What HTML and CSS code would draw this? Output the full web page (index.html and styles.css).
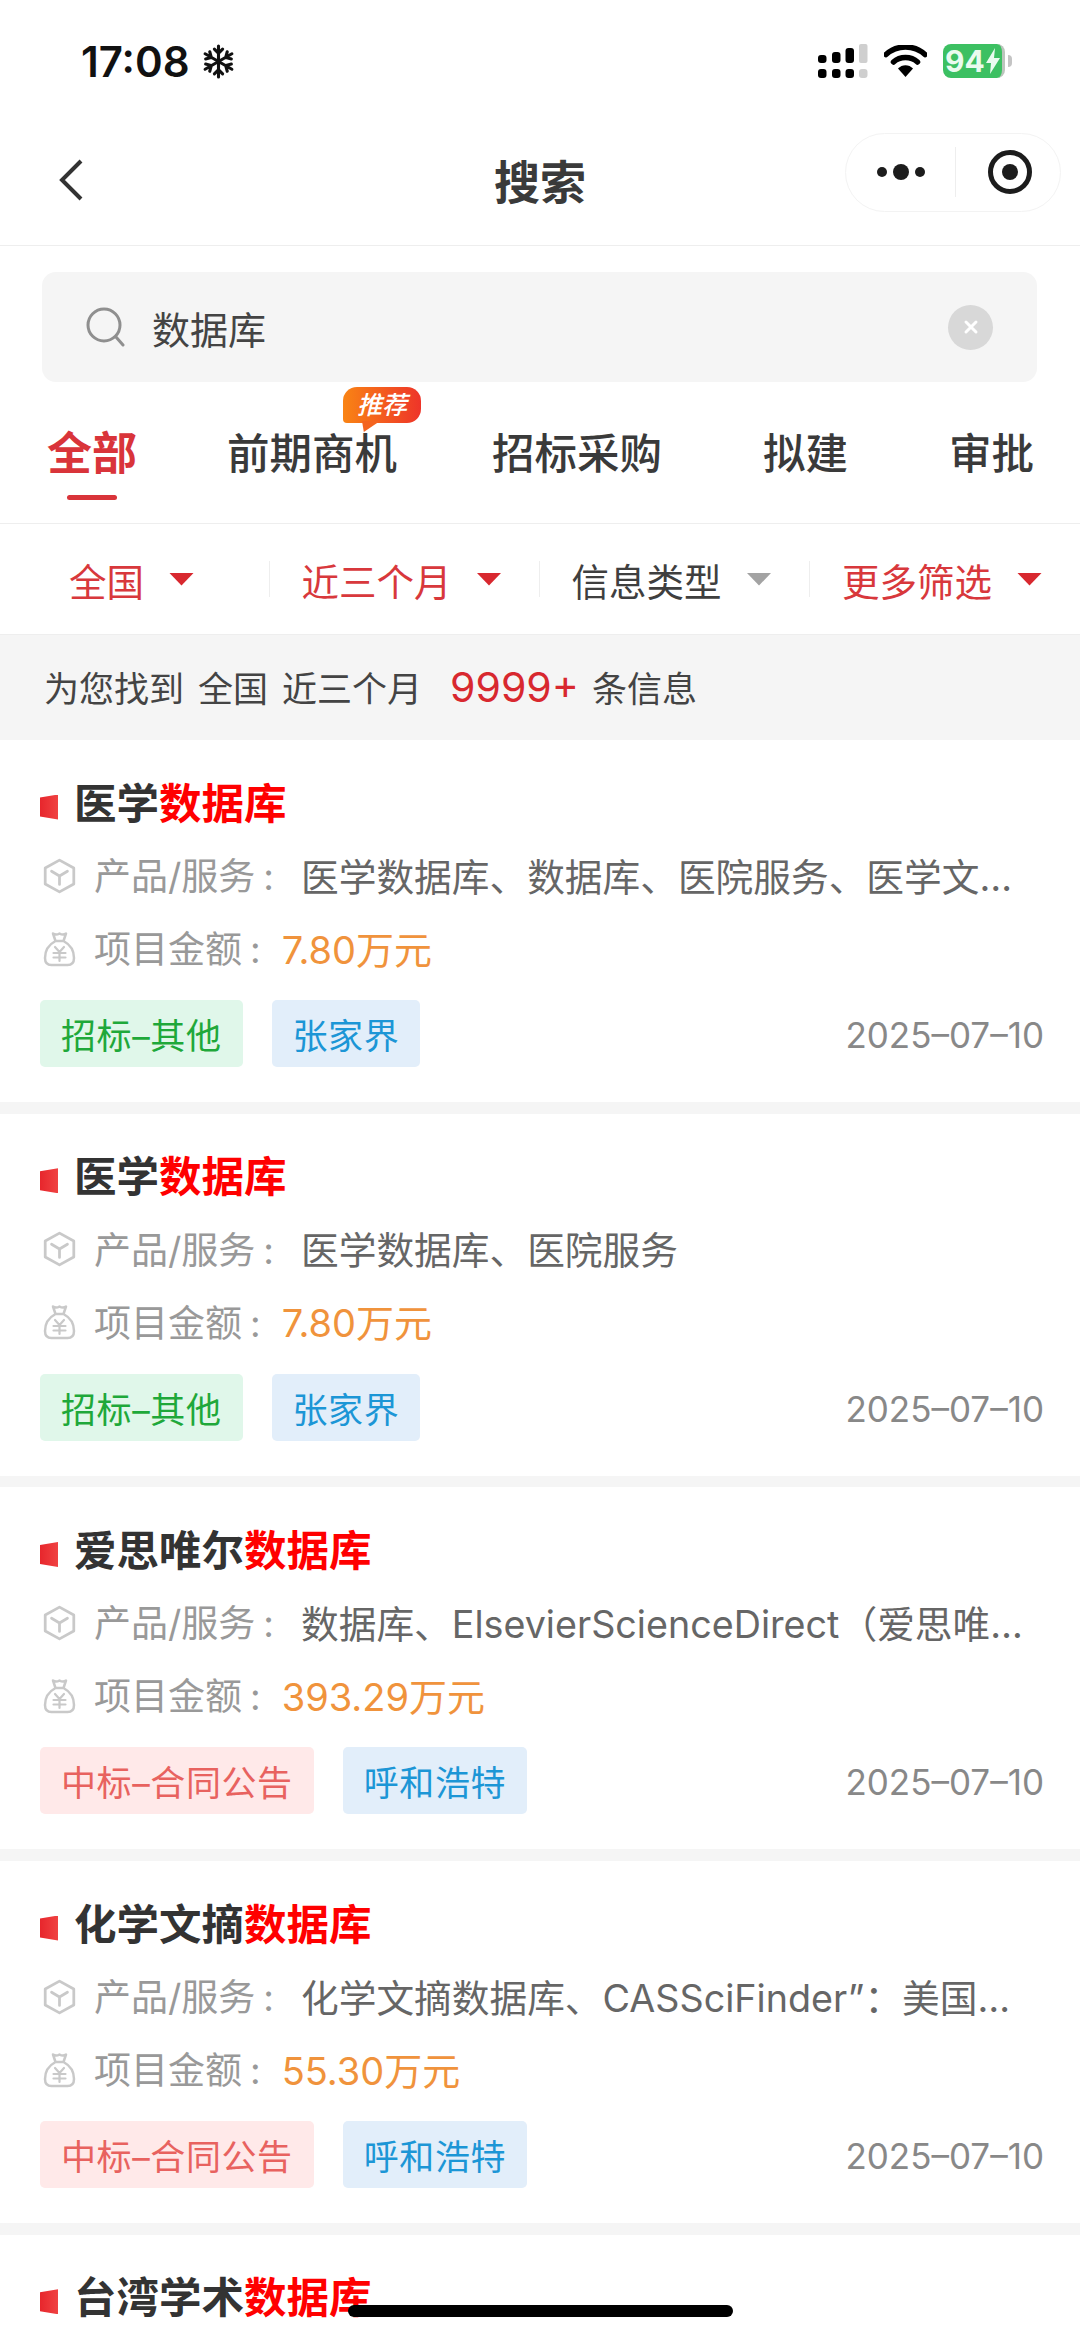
FILE: index.html
```html
<!DOCTYPE html>
<html lang="zh-CN">
<head>
    <meta charset="UTF-8">
    <meta name="viewport" content="width=device-width, initial-scale=1.0">
    <title>搜索</title>
    <link rel="stylesheet" href="styles.css">
</head>
<body>
    <svg class="defs" width="0" height="0">
        <symbol id="cube" viewBox="0 0 31 34">
            <path d="M15.5 2 29 9.500v15L15.5 32 2 24.500v-15z" fill="none" stroke="#c9c9c9" stroke-width="2.600" stroke-linejoin="round"/>
            <path d="M8 12.500l7.500 4.500 7.500-4.500M15.500 17v8" fill="none" stroke="#c9c9c9" stroke-width="2.600" stroke-linecap="round" stroke-linejoin="round"/>
        </symbol>
        <symbol id="bag" viewBox="0 0 33 36">
            <path d="M10 2.500c2 1.500 4 1.500 6.500 0 2.500 1.500 4.500 1.500 6.500 0l-2.500 7.500h-8zM12.500 10C6 13.500 2 20 2 27c0 4.500 2.500 7 6.500 7h16c4 0 6.500-2.500 6.500-7 0-7-4-13.500-10.500-17" fill="none" stroke="#c9c9c9" stroke-width="2.500" stroke-linejoin="round" stroke-linecap="round"/>
            <path d="M12 16l4.500 5 4.500-5M10.500 22h12M10.500 26.500h12M16.500 21v9" fill="none" stroke="#c9c9c9" stroke-width="2.200" stroke-linecap="round" stroke-linejoin="round"/>
        </symbol>
    </svg>

    <div class="status-bar">
        <div class="status-left">
            <span class="clock">17:08</span>
            <svg class="snow" viewBox="0 0 32 34" width="33" height="35">
                <g stroke="#111" stroke-width="3" stroke-linecap="round" fill="none">
                    <path d="M16 2v30M12 5l4 4 4-4M12 29l4-4 4 4"/>
                    <path d="M3 9.500l26 15M3.500 14.500l5.500-1.500-1.500-5.500M28.500 19.500l-5.500 1.500 1.500 5.500"/>
                    <path d="M29 9.500l-26 15M28.500 14.500l-5.500-1.500 1.500-5.500M3.500 19.500l5.500 1.500-1.500 5.500"/>
                </g>
            </svg>
        </div>
        <div class="status-right">
            <svg class="signal" viewBox="0 0 50 34" width="50" height="34">
                <rect x="0" y="11" width="8.500" height="8" rx="3" fill="#000"/>
                <rect x="14" y="8" width="8.500" height="11" rx="3" fill="#000"/>
                <rect x="27.500" y="4" width="8.500" height="15" rx="3" fill="#000"/>
                <rect x="41" y="0" width="8.500" height="19" rx="2" fill="#cfcfcf"/>
                <rect x="0" y="25" width="8.500" height="9" rx="3" fill="#000"/>
                <rect x="14" y="25" width="8.500" height="9" rx="3" fill="#000"/>
                <rect x="27.500" y="25" width="8.500" height="9" rx="3" fill="#000"/>
                <rect x="41" y="25" width="8.500" height="9" rx="3" fill="#cfcfcf"/>
            </svg>
            <svg class="wifi" viewBox="0 0 43 32" width="43" height="32">
                <path d="M2 9.500C13 -0.500 30 -0.500 41 9.500" fill="none" stroke="#000" stroke-width="5.500" stroke-linecap="round"/>
                <path d="M9.500 17C16 11 27 11 33.500 17" fill="none" stroke="#000" stroke-width="5.500" stroke-linecap="round"/>
                <path d="M14 23.500C18 19 25 19 29 23.500L21.500 32z" fill="#000"/>
            </svg>
            <div class="battery">
                <span class="battery-num">94</span>
                <svg viewBox="0 0 14 26" width="14" height="26"><path d="M9 0 0 15h5l-1 11 10-16H8z" fill="#eafbef"/></svg>
            </div>
            <span class="battery-cap"></span>
        </div>
    </div>

    <div class="nav">
        <svg class="back" viewBox="0 0 26 42" width="26" height="42">
            <path d="M23 2 4 21l19 19" fill="none" stroke="#333" stroke-width="4"/>
        </svg>
        <div class="nav-title">搜索</div>
        <div class="capsule">
            <svg viewBox="0 0 60 20" width="60" height="20">
                <circle cx="8" cy="10" r="5" fill="#1c1c1c"/>
                <circle cx="27" cy="10" r="8" fill="#1c1c1c"/>
                <circle cx="46" cy="10" r="5" fill="#1c1c1c"/>
            </svg>
            <span class="capsule-line"></span>
            <svg viewBox="0 0 44 44" width="44" height="44">
                <circle cx="22" cy="22" r="19.500" fill="none" stroke="#1c1c1c" stroke-width="5"/>
                <circle cx="22" cy="22" r="8" fill="#1c1c1c"/>
            </svg>
        </div>
    </div>

    <div class="search-wrap">
        <div class="search-box">
            <svg class="search-icon" viewBox="0 0 40 40" width="40" height="40">
                <circle cx="18" cy="18" r="16" fill="none" stroke="#8f8f8f" stroke-width="3"/>
                <path d="M30 30l7 8" fill="none" stroke="#8f8f8f" stroke-width="3" stroke-linecap="round"/>
            </svg>
            <span class="search-text">数据库</span>
            <span class="search-clear">
                <svg viewBox="0 0 16 16" width="16" height="16"><path d="M3 3l10 10M13 3 3 13" stroke="#fff" stroke-width="3" stroke-linecap="round"/></svg>
            </span>
        </div>
    </div>

    <div class="tabs">
        <div class="tab tab-active">全部</div>
        <div class="tab tab-second">前期商机<span class="tab-badge">推荐</span></div>
        <div class="tab tab-third">招标采购</div>
        <div class="tab tab-wide">拟建</div>
        <div class="tab tab-wide">审批</div>
    </div>

    <div class="filters">
        <div class="filter red">全国<i class="arrow"></i></div>
        <div class="filter red">近三个月<i class="arrow"></i></div>
        <div class="filter">信息类型<i class="arrow"></i></div>
        <div class="filter red">更多筛选<i class="arrow"></i></div>
    </div>

    <div class="summary">
        <span>为您找到</span><span class="summary-gap">全国</span><span class="summary-gap">近三个月</span><span class="count">9999+</span><span>条信息</span>
    </div>

    <div class="list">
        <div class="card">
            <div class="card-title"><i class="mark"></i>医学<em>数据库</em></div>
            <div class="row"><svg class="row-icon"><use href="#cube"/></svg><span class="label">产品/服务<span class="colon">:</span></span><span class="value">医学数据库、数据库、医院服务、医学文…</span></div>
            <div class="row"><svg class="row-icon"><use href="#bag"/></svg><span class="label">项目金额<span class="colon">:</span></span><span class="money">7.80万元</span></div>
            <div class="card-foot">
                <span class="tag tag-green">招标–其他</span>
                <span class="tag tag-blue">张家界</span>
                <span class="date">2025–07–10</span>
            </div>
        </div>

        <div class="card">
            <div class="card-title"><i class="mark"></i>医学<em>数据库</em></div>
            <div class="row"><svg class="row-icon"><use href="#cube"/></svg><span class="label">产品/服务<span class="colon">:</span></span><span class="value">医学数据库、医院服务</span></div>
            <div class="row"><svg class="row-icon"><use href="#bag"/></svg><span class="label">项目金额<span class="colon">:</span></span><span class="money">7.80万元</span></div>
            <div class="card-foot">
                <span class="tag tag-green">招标–其他</span>
                <span class="tag tag-blue">张家界</span>
                <span class="date">2025–07–10</span>
            </div>
        </div>

        <div class="card">
            <div class="card-title"><i class="mark"></i>爱思唯尔<em>数据库</em></div>
            <div class="row"><svg class="row-icon"><use href="#cube"/></svg><span class="label">产品/服务<span class="colon">:</span></span><span class="value">数据库、ElsevierScienceDirect（爱思唯…</span></div>
            <div class="row"><svg class="row-icon"><use href="#bag"/></svg><span class="label">项目金额<span class="colon">:</span></span><span class="money">393.29万元</span></div>
            <div class="card-foot">
                <span class="tag tag-red">中标–合同公告</span>
                <span class="tag tag-blue">呼和浩特</span>
                <span class="date">2025–07–10</span>
            </div>
        </div>

        <div class="card">
            <div class="card-title"><i class="mark"></i>化学文摘<em>数据库</em></div>
            <div class="row"><svg class="row-icon"><use href="#cube"/></svg><span class="label">产品/服务<span class="colon">:</span></span><span class="value">化学文摘数据库、CASSciFinder”：美国…</span></div>
            <div class="row"><svg class="row-icon"><use href="#bag"/></svg><span class="label">项目金额<span class="colon">:</span></span><span class="money">55.30万元</span></div>
            <div class="card-foot">
                <span class="tag tag-red">中标–合同公告</span>
                <span class="tag tag-blue">呼和浩特</span>
                <span class="date">2025–07–10</span>
            </div>
        </div>

        <div class="card card-last">
            <div class="card-title"><i class="mark"></i>台湾学术<em>数据库</em></div>
        </div>
    </div>

    <div class="home-bar"></div>
</body>
</html>
```

FILE: styles.css
```css
html, body {
    height: 2338px;
    overflow: hidden;
}
body {
    position: relative;
    margin: 0;
    background-color: #fff;
    color: #333;
    font-family: Inter, "Noto Sans CJK SC", sans-serif;
}
.defs {
    position: absolute;
}

/* status bar */
.status-bar {
    display: flex;
    justify-content: space-between;
    align-items: center;
    height: 122px;
    padding: 0 68px 0 81px;
    box-sizing: border-box;
}
.status-left {
    display: flex;
    align-items: center;
    gap: 12px;
}
.clock {
    font-size: 42px;
    font-weight: 600;
    color: #111;
}
.status-right {
    display: flex;
    align-items: center;
}
.signal {
    margin-right: 16px;
}
.wifi {
    margin-right: 16px;
}
.battery {
    display: flex;
    align-items: center;
    justify-content: center;
    gap: 1px;
    width: 62px;
    height: 34px;
    box-sizing: border-box;
    background-color: #3cc062;
    border-right: 3px solid #bcc5bd;
    border-radius: 8px;
}
.battery-num {
    font-size: 30px;
    font-weight: 700;
    color: #eafbef;
}
.battery-cap {
    width: 4px;
    height: 12px;
    margin-left: 3px;
    background-color: #c4c4c4;
    border-radius: 0 4px 4px 0;
}

/* title bar */
.nav {
    display: grid;
    grid-template-columns: 1fr auto 1fr;
    align-items: center;
    height: 124px;
    padding-bottom: 8px;
    box-sizing: border-box;
    border-bottom: 1px solid #eee;
}
.back {
    margin-left: 58px;
}
.nav-title {
    font-size: 46px;
    font-weight: 700;
    color: #3a3a3a;
    transform: translateY(-1px);
}
.capsule {
    display: flex;
    align-items: center;
    justify-self: end;
    width: 216px;
    height: 79px;
    margin: 0 19px 15px 0;
    box-sizing: border-box;
    border: 1px solid #f3f3f3;
    border-radius: 40px;
}
.capsule svg:first-child {
    margin-left: 28px;
}
.capsule-line {
    width: 1px;
    height: 50px;
    margin: 0 32px 0 21px;
    background-color: #eee;
}

/* search box */
.search-wrap {
    padding: 26px 43px 0 42px;
}
.search-box {
    display: flex;
    align-items: center;
    height: 110px;
    padding: 0 44px;
    background-color: #f5f5f5;
    border-radius: 14px;
}
.search-icon {
    margin-right: 26px;
}
.search-text {
    flex: 1;
    font-size: 38px;
    color: #444;
}
.search-clear {
    display: flex;
    align-items: center;
    justify-content: center;
    width: 45px;
    height: 45px;
    background-color: #d8d8d8;
    border-radius: 50%;
}

/* tabs */
.tabs {
    display: flex;
    height: 142px;
    padding-left: 47px;
    border-bottom: 1px solid #eee;
    box-sizing: border-box;
}
.tab {
    position: relative;
    margin-top: 41px;
    font-size: 42.500px;
    font-weight: 500;
    line-height: 62px;
    color: #3a3a3a;
}
.tab-active {
    font-size: 45px;
    font-weight: 700;
    color: #d9343a;
}
.tab-active::after {
    content: "";
    position: absolute;
    left: 20px;
    top: 72px;
    width: 50px;
    height: 5px;
    background-color: #d9343a;
    border-radius: 3px;
}
.tab-second {
    margin-left: 90px;
}
.tab-third {
    margin-left: 95px;
}
.tab-wide {
    margin-left: 101px;
}
.tab-badge {
    position: absolute;
    left: 116px;
    top: -36px;
    width: 78px;
    height: 36px;
    background: linear-gradient(90deg, #f98414, #ee3429);
    border-radius: 14px 14px 14px 4px;
    font-size: 25px;
    font-style: italic;
    font-weight: 500;
    line-height: 36px;
    text-align: center;
    color: #fff;
}
.tab-badge::after {
    content: "";
    position: absolute;
    left: 19px;
    top: 34px;
    width: 18px;
    height: 11px;
    background-color: #f4641f;
    clip-path: polygon(0 0, 100% 0, 10% 100%);
}

/* filters */
.filters {
    display: grid;
    grid-template-columns: repeat(4, 270px);
    align-items: center;
    height: 111px;
    border-bottom: 1px solid #eee;
    box-sizing: border-box;
}
.filter {
    display: flex;
    align-items: center;
    justify-content: center;
    gap: 25px;
    height: 36px;
    padding-right: 6px;
    box-sizing: border-box;
    border-right: 1px solid #eee;
    font-size: 37.500px;
    color: #3f3f3f;
}
.filter:last-child {
    border-right: none;
}
.arrow {
    width: 25px;
    height: 13px;
    background-color: #a3a3a3;
    clip-path: polygon(0 0, 100% 0, 50% 100%);
}
.filter.red {
    color: #d8383c;
}
.filter.red .arrow {
    background-color: #d8282f;
}

/* result count */
.summary {
    display: flex;
    align-items: center;
    height: 105px;
    padding: 0 0 2px 44px;
    box-sizing: border-box;
    background-color: #f5f5f5;
    font-size: 35px;
    color: #444;
}
.summary-gap {
    margin-left: 14px;
}
.count {
    margin: 0 13px 0 28px;
    font-size: 41px;
    color: #d8282f;
}

/* result cards */
.list {
    display: flex;
    flex-direction: column;
    gap: 11.700px;
    background-color: #f5f5f5;
}
.card {
    height: 362px;
    padding: 27px 36px 0 40px;
    box-sizing: border-box;
    background-color: #fff;
}
.card-last {
    height: auto;
    padding-bottom: 5px;
}
.card-title {
    display: flex;
    align-items: center;
    height: 72px;
    padding-bottom: 6px;
    box-sizing: border-box;
    font-size: 42.500px;
    font-weight: 700;
    color: #333;
}
.card-title em {
    font-style: normal;
    color: #f00;
}
.mark {
    width: 18px;
    height: 25px;
    margin: 14px 16px 0 0;
    background: linear-gradient(90deg, #e7262c, #f04242);
    clip-path: polygon(0 12%, 100% 0, 100% 100%, 0 88%);
}
.row {
    display: flex;
    align-items: center;
    height: 73px;
    padding-bottom: 3px;
    box-sizing: border-box;
    font-size: 37px;
}
.row-icon {
    flex: none;
    width: 33px;
    height: 36px;
    margin: 3px 18px 0 3px;
}
.label {
    flex: none;
    color: #999;
}
.colon {
    margin-left: 8px;
}
.value {
    margin-left: 27px;
    font-size: 37.700px;
    color: #666;
    white-space: nowrap;
}
.money {
    margin-left: 21px;
    font-size: 38px;
    color: #f0933c;
}
.card-foot {
    display: flex;
    align-items: center;
    gap: 29px;
    margin-top: 15px;
}
.tag {
    display: flex;
    align-items: center;
    height: 67px;
    padding: 0 21px;
    border-radius: 5px;
    font-size: 35px;
    letter-spacing: 0.600px;
}
.tag-green {
    background-color: #e0f7ea;
    color: #1fa83a;
}
.tag-blue {
    background-color: #e2eefa;
    color: #1c96d6;
}
.tag-red {
    background-color: #ffe9e9;
    color: #e8625f;
}
.date {
    margin: 3px 0 0 auto;
    font-size: 35px;
    color: #888;
}

.home-bar {
    position: absolute;
    left: 348px;
    top: 2305px;
    width: 385px;
    height: 12px;
    background-color: #000;
    border-radius: 6px;
}
```
